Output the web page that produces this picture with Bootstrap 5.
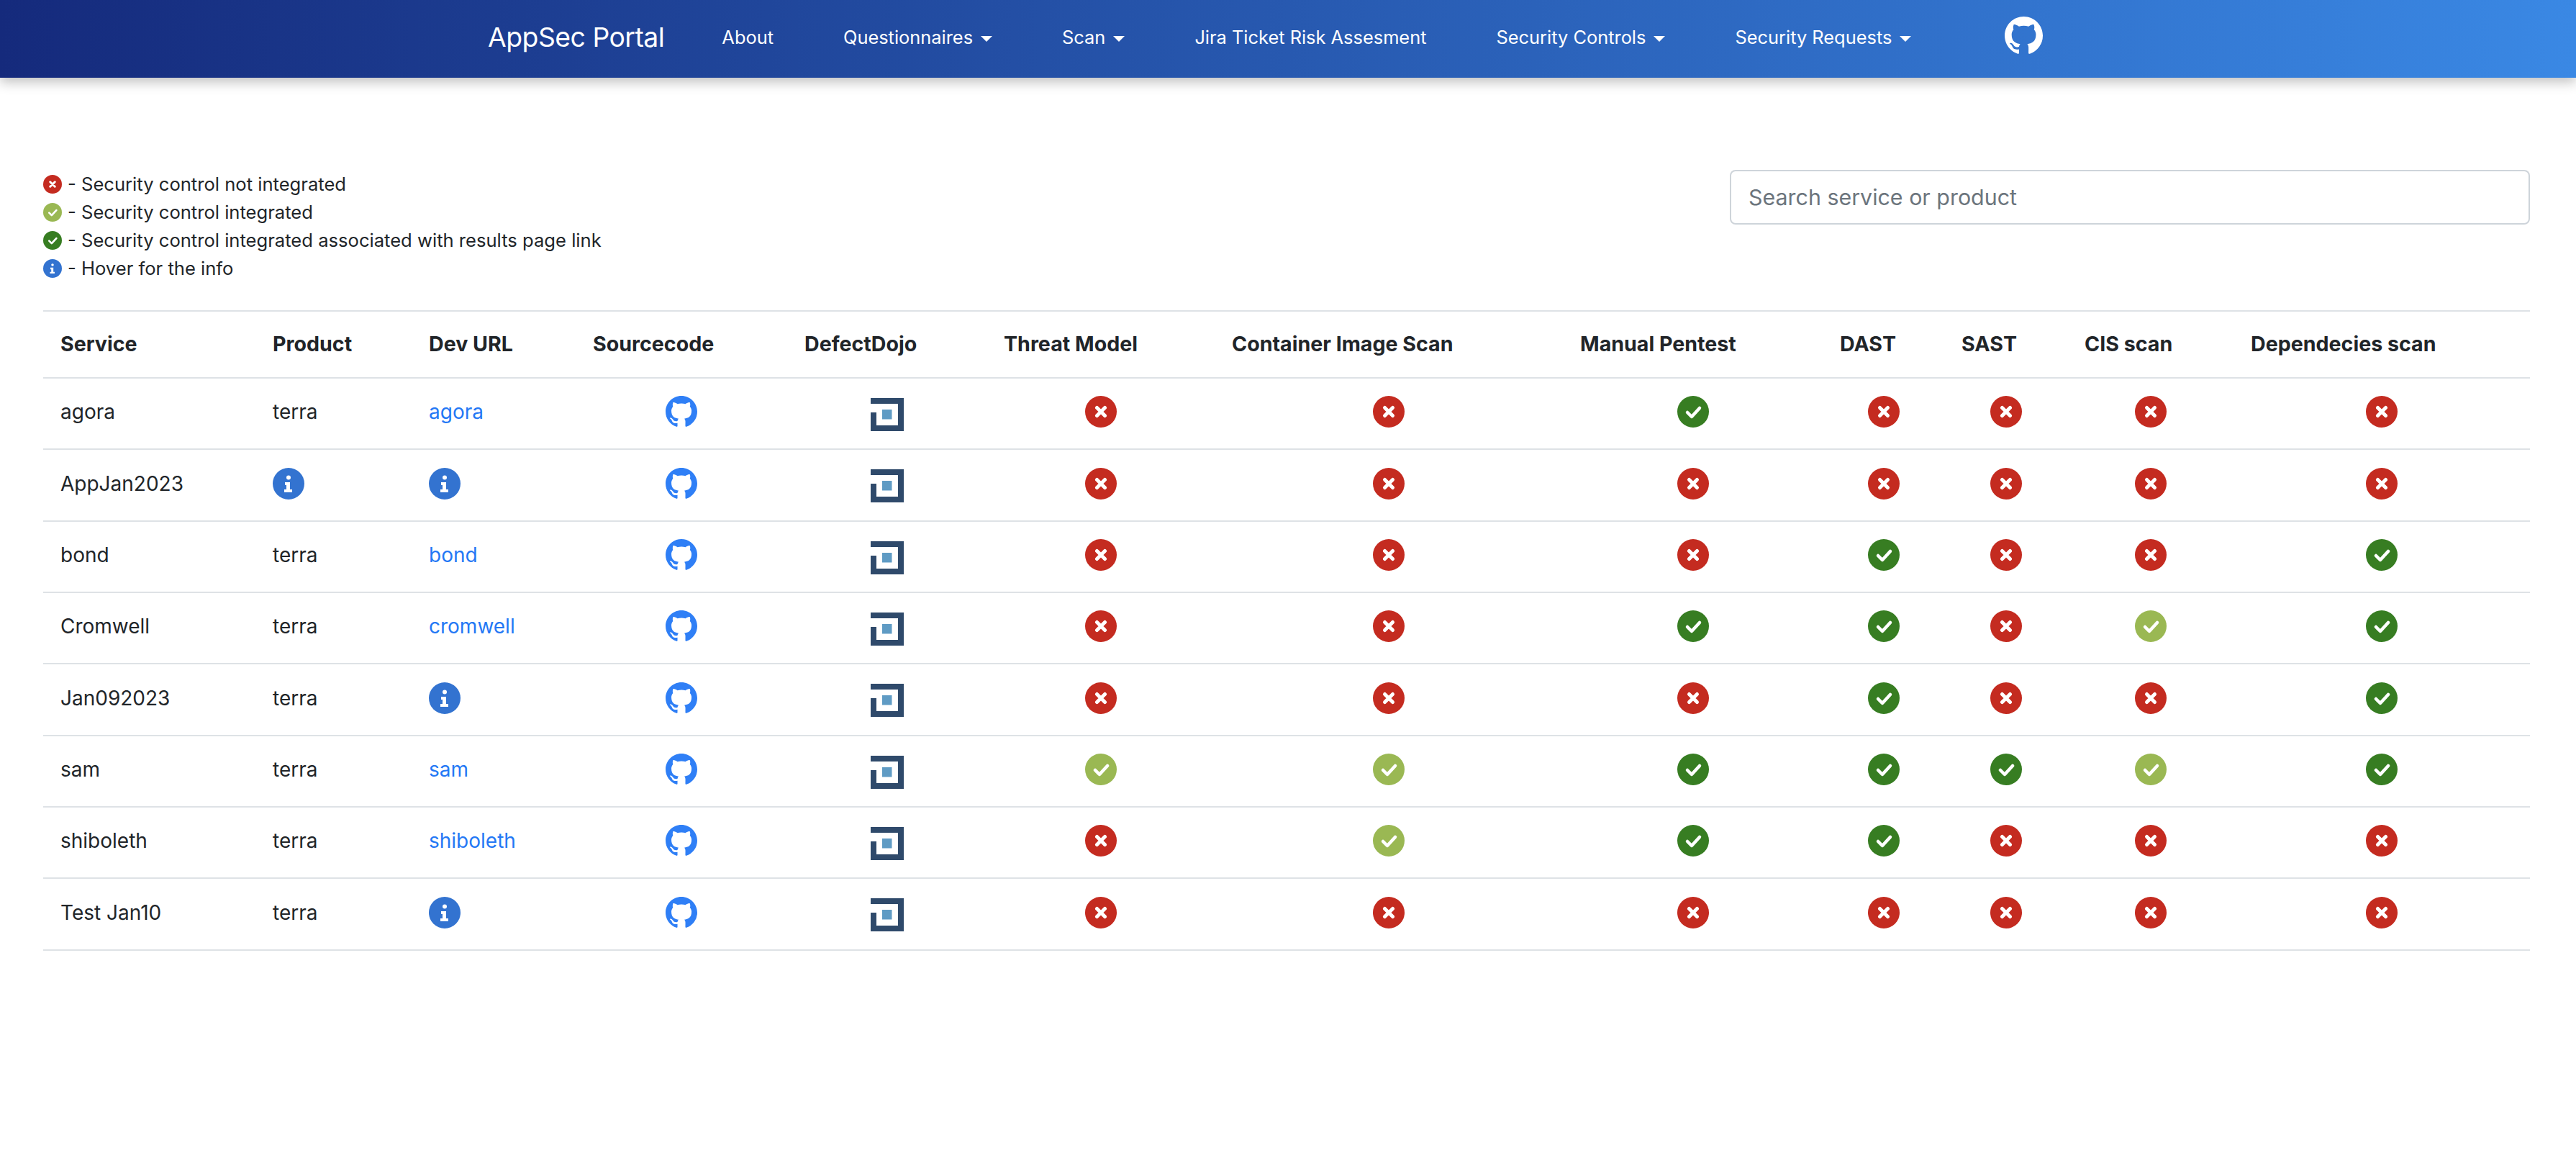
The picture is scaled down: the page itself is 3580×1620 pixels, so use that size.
<!DOCTYPE html>
<html lang="en">
<head>
    <meta charset="UTF-8">
    <meta name="viewport" content="width=device-width, initial-scale=1.0">
    <title>AppSec Portal</title>
    <link href="https://cdn.jsdelivr.net/npm/bootstrap@5.3.0/dist/css/bootstrap.min.css" rel="stylesheet">
    <style>
        body {
            font-family: Inter, "Liberation Sans", sans-serif;
            font-size: 28px;
            color: #212529;
        }
        .portal-nav {
            height: 108px;
            padding: 0 0 4px 678px;
            background: linear-gradient(90deg, #152a7c, #3a88e4);
            box-shadow: 0 6px 16px rgba(0, 0, 0, .25);
        }
        .portal-nav .navbar-brand {
            font-size: 37.3px;
            color: #fff;
            padding: 0;
            margin-right: 80px;
            letter-spacing: -.5px;
        }
        .portal-nav .nav-link {
            font-size: 25.4px;
            color: #fff;
            padding: 0 !important;
        }
        .portal-nav .nav-item { margin-right: 97px; }
        .portal-nav .git-item { margin-left: 33px; margin-right: 0; }
        .portal-nav .dropdown-toggle::after {
            margin-left: 11px;
            border-top-width: 8px;
            border-left-width: 8px;
            border-right-width: 8px;
            vertical-align: 3px;
        }
        .git-mark { width: 53px; height: 53px; display: block; margin-bottom: 5px; }
        .page-body { padding: 128px 64px 0 60px; }
        .legend-line { font-size: 25.6px; line-height: 39px; display: flex; align-items: center; gap: 8px; }
        .legend-line svg { width: 26px; height: 26px; }
        .search-box {
            width: 1112px;
            height: 76px;
            font-size: 30.4px;
            padding: 0 24px;
            border: 2px solid #ced4da;
            border-radius: 8px;
        }
        .search-box::placeholder { color: #6c757d; }
        .apps-table { table-layout: fixed; width: 3456px; margin-top: 39px; margin-bottom: 0; }
        .apps-table th, .apps-table td {
            padding: 0 24px 5px;
            height: 99px;
            font-size: 28px;
            vertical-align: middle;
            border-bottom: 2px solid #dee2e6;
        }
        .apps-table tbody tr:nth-child(3n+2) td { height: 100px; }
        .apps-table thead th { height: 93px; padding-bottom: 0; font-size: 28.6px; border-top: 2px solid #dee2e6; font-weight: 700; }
        .apps-table a { color: #2478f5; text-decoration: none; }
        .apps-table td.mid { text-align: center; }
        .stat { width: 44px; height: 44px; display: inline-block; vertical-align: middle; margin-top: -2px; }
        .git-cell { width: 44px; height: 44px; display: inline-block; vertical-align: middle; margin-top: -2px; color: #2f7ff6; }
        .dojo { width: 46px; height: 46px; display: inline-block; vertical-align: middle; margin-top: 7px; }
    </style>
</head>
<body>
    <svg width="0" height="0" class="position-absolute">
        <defs>
            <symbol id="i-no" viewBox="0 0 44 44"><circle cx="22" cy="22" r="22" fill="#c42b20"/><path d="M16.5 16.5l11 11M27.5 16.5l-11 11" stroke="#fff" stroke-width="5" stroke-linecap="round"/></symbol>
            <symbol id="i-ok" viewBox="0 0 44 44"><circle cx="22" cy="22" r="22" fill="#9ab853"/><path d="M14 23l6 6 11-12" fill="none" stroke="#fff" stroke-width="4.5" stroke-linecap="round" stroke-linejoin="round"/></symbol>
            <symbol id="i-link" viewBox="0 0 44 44"><circle cx="22" cy="22" r="22" fill="#377d22"/><path d="M14 23l6 6 11-12" fill="none" stroke="#fff" stroke-width="4.5" stroke-linecap="round" stroke-linejoin="round"/></symbol>
            <symbol id="i-info" viewBox="0 0 44 44"><circle cx="22" cy="22" r="22" fill="#3373d0"/><circle cx="22" cy="13.5" r="3" fill="#fff"/><path d="M17 20h7v10h3v4H16v-4h3v-6h-2z" fill="#fff"/></symbol>
            <symbol id="i-git" viewBox="0 0 16 16"><path fill="currentColor" d="M8 0C3.58 0 0 3.58 0 8c0 3.54 2.29 6.53 5.47 7.59.4.07.55-.17.55-.38 0-.19-.01-.82-.01-1.49-2.01.37-2.53-.49-2.69-.94-.09-.23-.48-.94-.82-1.13-.28-.15-.68-.52-.01-.53.63-.01 1.08.58 1.23.82.72 1.21 1.87.87 2.33.66.07-.52.28-.87.51-1.07-1.78-.2-3.64-.89-3.64-3.95 0-.87.31-1.59.82-2.15-.08-.2-.36-1.02.08-2.12 0 0 .67-.21 2.2.82.64-.18 1.32-.27 2-.27.68 0 1.36.09 2 .27 1.53-1.04 2.2-.82 2.2-.82.44 1.1.16 1.92.08 2.12.51.56.82 1.27.82 2.15 0 3.07-1.87 3.75-3.65 3.95.29.25.54.73.54 1.48 0 1.07-.01 1.93-.01 2.2 0 .21.15.46.55.38A8.013 8.013 0 0016 8c0-4.42-3.58-8-8-8z"/></symbol>
            <symbol id="i-dojo" viewBox="0 0 46 46"><path fill="#2f4a6b" d="M0 0h46v46H0V20h8v18h30V8H0z"/><path fill="#5f9bc4" d="M16 16h13.5v13.5H16z"/></symbol>
        </defs>
    </svg>

    <nav class="navbar navbar-expand portal-nav">
        <a class="navbar-brand" href="#">AppSec Portal</a>
        <ul class="navbar-nav align-items-center">
            <li class="nav-item"><a class="nav-link" href="#">About</a></li>
            <li class="nav-item dropdown"><a class="nav-link dropdown-toggle" href="#" data-bs-toggle="dropdown">Questionnaires</a></li>
            <li class="nav-item dropdown"><a class="nav-link dropdown-toggle" href="#" data-bs-toggle="dropdown">Scan</a></li>
            <li class="nav-item"><a class="nav-link" href="#">Jira Ticket Risk Assesment</a></li>
            <li class="nav-item dropdown"><a class="nav-link dropdown-toggle" href="#" data-bs-toggle="dropdown">Security Controls</a></li>
            <li class="nav-item dropdown"><a class="nav-link dropdown-toggle" href="#" data-bs-toggle="dropdown">Security Requests</a></li>
            <li class="nav-item git-item"><a class="nav-link text-white" href="#"><svg class="git-mark"><use href="#i-git"/></svg></a></li>
        </ul>
    </nav>

    <div class="page-body">
        <div class="d-flex justify-content-between align-items-start">
            <div>
                <div class="legend-line"><svg><use href="#i-no"/></svg>- Security control not integrated</div>
                <div class="legend-line"><svg><use href="#i-ok"/></svg>- Security control integrated</div>
                <div class="legend-line"><svg><use href="#i-link"/></svg>- Security control integrated associated with results page link</div>
                <div class="legend-line"><svg><use href="#i-info"/></svg>- Hover for the info</div>
            </div>
            <input class="form-control search-box" type="text" placeholder="Search service or product">
        </div>

        <table class="table apps-table">
            <colgroup>
                <col style="width:295px"><col style="width:217px"><col style="width:228px"><col style="width:294px">
                <col style="width:277px"><col style="width:317px"><col style="width:484px"><col style="width:361px">
                <col style="width:169px"><col style="width:171px"><col style="width:231px"><col style="width:412px">
            </colgroup>
            <thead>
                <tr>
                    <th>Service</th><th>Product</th><th>Dev URL</th><th>Sourcecode</th><th>DefectDojo</th><th>Threat Model</th>
                    <th>Container Image Scan</th><th>Manual Pentest</th><th>DAST</th><th>SAST</th><th>CIS scan</th><th>Dependecies scan</th>
                </tr>
            </thead>
            <tbody id="rows"></tbody>
        </table>
    </div>

    <script src="https://cdn.jsdelivr.net/npm/bootstrap@5.3.0/dist/js/bootstrap.bundle.min.js"></script>
    <script>
        // n = not integrated, o = integrated, l = integrated with link
        const services = [
            ['agora', 'terra', 'agora', 'nnlnnnn'],
            ['AppJan2023', null, null, 'nnnnnnn'],
            ['bond', 'terra', 'bond', 'nnnlnnl'],
            ['Cromwell', 'terra', 'cromwell', 'nnllnol'],
            ['Jan092023', 'terra', null, 'nnnlnnl'],
            ['sam', 'terra', 'sam', 'oolllol'],
            ['shiboleth', 'terra', 'shiboleth', 'nollnnn'],
            ['Test Jan10', 'terra', null, 'nnnnnnn'],
        ];
        const iconIds = { n: 'i-no', o: 'i-ok', l: 'i-link' };
        const info = '<svg class="stat"><use href="#i-info"/></svg>';

        document.getElementById('rows').innerHTML = services.map(([name, product, url, marks]) => `
            <tr>
                <td>${name}</td>
                <td>${product || info}</td>
                <td>${url ? `<a href="#">${url}</a>` : info}</td>
                <td class="mid"><svg class="git-cell"><use href="#i-git"/></svg></td>
                <td class="mid"><svg class="dojo"><use href="#i-dojo"/></svg></td>
                ${[...marks].map(m => `<td class="mid"><svg class="stat"><use href="#${iconIds[m]}"/></svg></td>`).join('')}
            </tr>`).join('');
    </script>
</body>
</html>
